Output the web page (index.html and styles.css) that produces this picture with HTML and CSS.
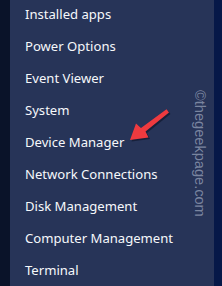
FILE: index.html
```html
<!DOCTYPE html>
<html>
<head>
<meta charset="utf-8">
<link rel="stylesheet" href="styles.css">
</head>
<body>
<div class="screen">
  <div class="gutter-left"></div>
  <div class="menu">
    <ul class="items">
      <li class="item">Installed apps</li>
      <li class="item">Power Options</li>
      <li class="item">Event Viewer</li>
      <li class="item">System</li>
      <li class="item">Device Manager</li>
      <li class="item">Network Connections</li>
      <li class="item">Disk Management</li>
      <li class="item">Computer Management</li>
      <li class="item">Terminal</li>
    </ul>
    <div class="watermark">©thegeekpage.com</div>
    <svg class="arrow" width="50" height="40" viewBox="0 0 50 40">
      <g transform="translate(1.5,1.5)" fill="#0d1428" opacity="0.6">
        <path d="M36.5 2.2 L39 5.4 L15.5 24.5 L18.5 30.5 L0 33 L6 16.5 L11 21 Z"/>
      </g>
      <path fill="#ee3a3f" d="M36.5 2.2 L39 5.4 L15.5 24.5 L18.5 30.5 L0 33 L6 16.5 L11 21 Z"/>
    </svg>
  </div>
  <div class="gutter-right"></div>
</div>
</body>
</html>
```
FILE: styles.css
```css
html, body {
  margin: 0;
  padding: 0;
}
body {
  width: 222px;
  height: 286px;
  overflow: hidden;
  background: #061848;
}
.screen {
  display: flex;
  height: 286px;
}
.gutter-left {
  width: 10px;
  background: #0a1329;
}
.menu {
  position: relative;
  width: 204px;
  background: #273458;
  overflow: hidden;
}
.gutter-right {
  flex: 1;
  background: #061848;
}
.items {
  list-style: none;
  margin: -2px 0 0 0;
  padding: 0;
}
.item {
  height: 32px;
  line-height: 32px;
  padding-left: 15px;
  font-family: "Noto Sans", "Open Sans", sans-serif;
  font-size: 13.1px;
  color: #f6f8fb;
  white-space: nowrap;
}
.watermark {
  position: absolute;
  left: 198px;
  top: 90px;
  transform-origin: 0 0;
  transform: rotate(90deg);
  font-family: "Liberation Sans", Arial, sans-serif;
  font-size: 14.6px;
  line-height: 16px;
  color: rgba(160, 170, 192, 0.7);
  white-space: nowrap;
}
.arrow {
  position: absolute;
  left: 120px;
  top: 107px;
}
```
